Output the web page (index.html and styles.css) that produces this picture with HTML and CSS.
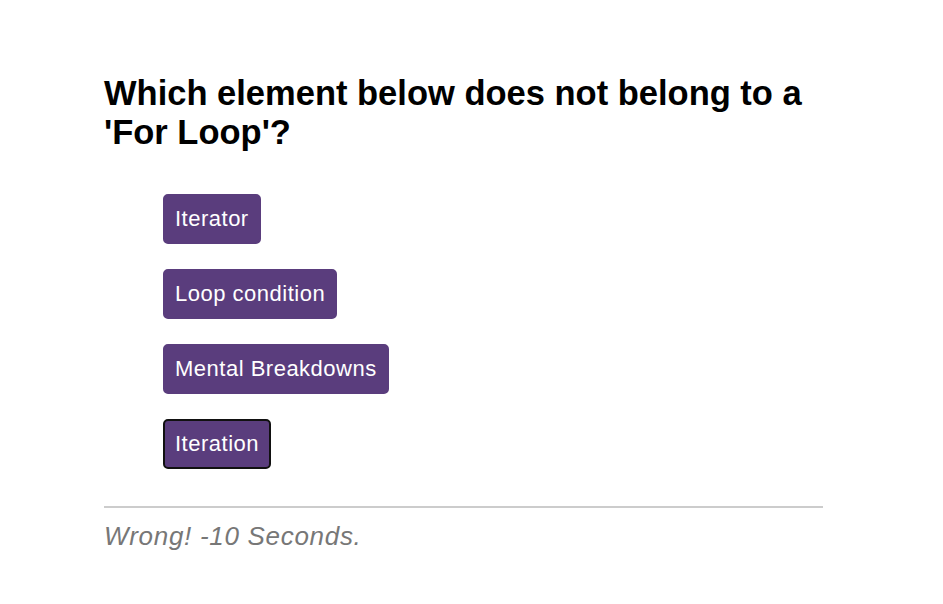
FILE: index.html
```html
<!DOCTYPE html>
<html>
<head>
<meta charset="utf-8">
<link rel="stylesheet" href="styles.css">
</head>
<body>
<main class="quiz">
  <h1 class="question">Which element below does not belong to a 'For Loop'?</h1>
  <div class="choices">
    <button class="choice">Iterator</button>
    <button class="choice">Loop condition</button>
    <button class="choice">Mental Breakdowns</button>
    <button class="choice selected">Iteration</button>
  </div>
  <div class="feedback">
    <p class="result">Wrong! -10 Seconds.</p>
  </div>
</main>
</body>
</html>
```
FILE: styles.css
```css
html, body {
  margin: 0;
  padding: 0;
  background: #fff;
}
body {
  font-family: "Liberation Sans", Arial, sans-serif;
}
.quiz {
  width: 719px;
  margin-left: 104px;
  padding-top: 74px;
}
.question {
  margin: 0;
  font-size: 34.5px;
  line-height: 39px;
  font-weight: bold;
  color: #000;
}
.choices {
  display: flex;
  flex-direction: column;
  align-items: flex-start;
  gap: 25px;
  padding-left: 59px;
  margin-top: 42px;
}
.choice {
  font-family: "Liberation Sans", Arial, sans-serif;
  font-size: 22px;
  letter-spacing: 0.5px;
  line-height: 26px;
  color: #fff;
  background: #5a3d7d;
  border: 2px solid #5a3d7d;
  border-radius: 5px;
  padding: 10px 10px;
  height: 50px;
}
.choice.selected {
  border-color: #111;
}
.feedback {
  margin-top: 37px;
  border-top: 2px solid #ccc;
}
.result {
  margin: 13px 0 0;
  font-size: 26px;
  letter-spacing: 0.7px;
  line-height: 30px;
  font-style: italic;
  color: #777;
}
```
